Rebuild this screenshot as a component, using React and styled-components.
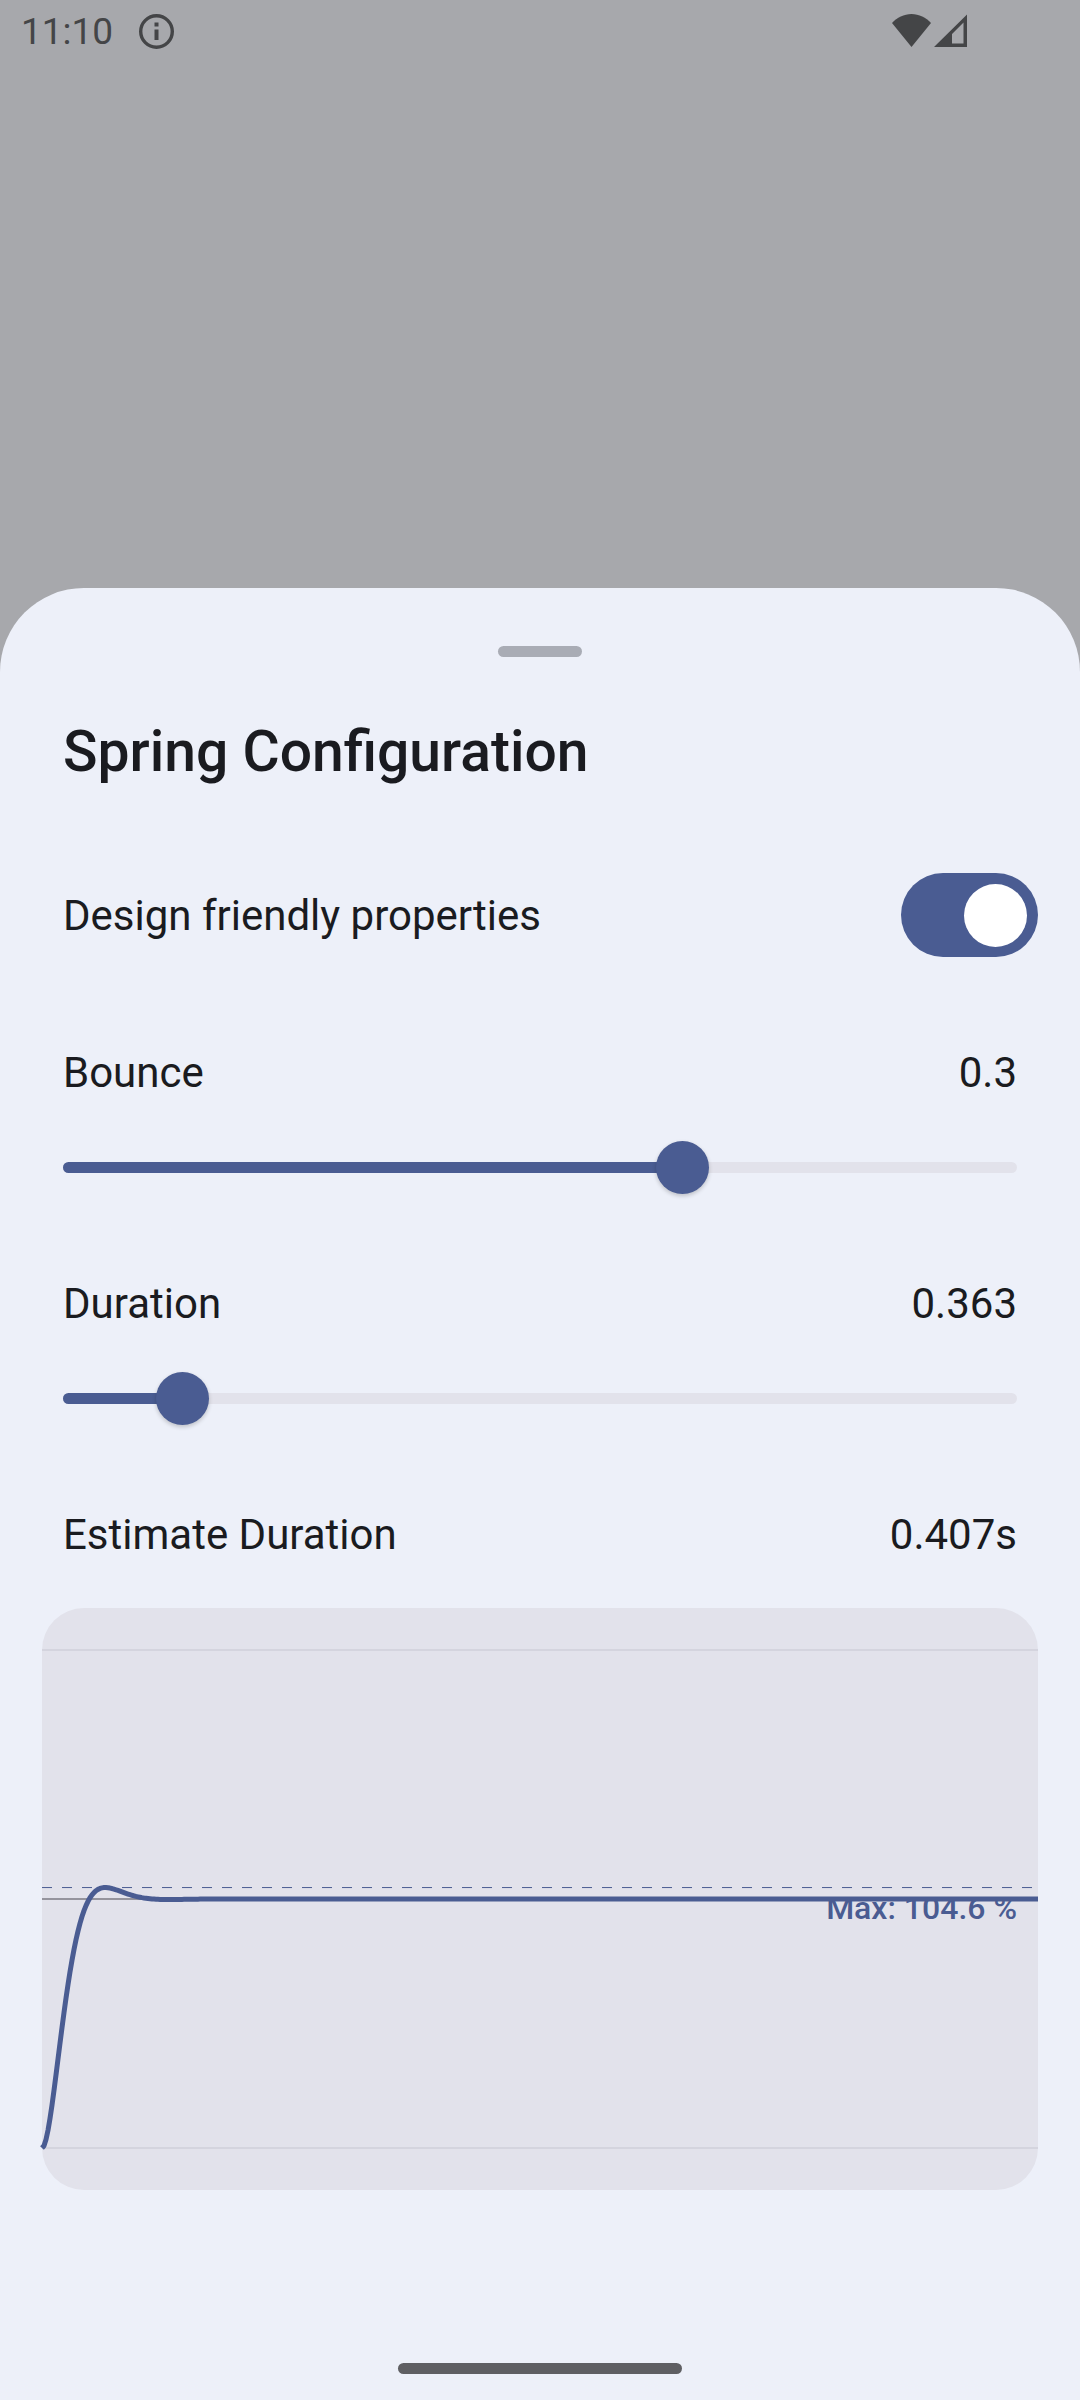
import React, { useState } from "react";
import styled, { createGlobalStyle } from "styled-components";

const color = {
  scrim: "#a7a8ac",
  status: "#444547",
  sheet: "#edf0f9",
  ink: "#1a1b20",
  primary: "#4a5c92",
  track: "#e2e2eb",
  handle: "#a9acb5",
  gesture: "#5f5f63",
  gridLight: "#d4d4de",
  gridStrong: "#95949d",
};

const GlobalStyle = createGlobalStyle`
  *, *::before, *::after { box-sizing: border-box; }
  body {
    margin: 0;
    background: ${color.scrim};
    color: ${color.ink};
    font-family: Roboto, "Noto Sans", sans-serif;
  }
`;

const Screen = styled.div`
  display: flex;
  flex-direction: column;
  min-height: 100vh;
`;

const StatusBar = styled.header`
  display: flex;
  align-items: center;
  justify-content: space-between;
  padding: 0 113px 0 21px;
  color: ${color.status};
`;

const StatusGroup = styled.div`
  display: flex;
  align-items: center;
  gap: ${(p) => p.$gap}px;
`;

const Clock = styled.time`
  font-size: 37px;
  line-height: 63px;
`;

const Sheet = styled.main`
  display: flex;
  flex-direction: column;
  margin-top: auto;
  padding: 58px 42px 26px;
  border-radius: 84px 84px 0 0;
  background: ${color.sheet};
`;

const Pill = styled.div`
  align-self: center;
  width: ${(p) => p.$width}px;
  height: 11px;
  border-radius: 6px;
  background: ${(p) => p.$color};
`;

const Title = styled.h1`
  margin: 58px 21px 84px;
  font-size: 57px;
  line-height: 74px;
  font-weight: 500;
`;

const SwitchRow = styled.div`
  display: flex;
  align-items: center;
  justify-content: space-between;
  padding-left: 21px;
  margin-bottom: 84px;
`;

const Label = styled.label`
  font-size: 42px;
  line-height: 63px;
`;

const Value = styled.output`
  font-size: 42px;
  line-height: 63px;
`;

const Switch = styled.input`
  appearance: none;
  display: flex;
  align-items: center;
  width: 137px;
  height: 84px;
  margin: 0;
  padding: 0 11px;
  border-radius: 42px;
  background: ${color.handle};

  &::before {
    content: "";
    width: 63px;
    height: 63px;
    border-radius: 50%;
    background: #fff;
  }

  &:checked {
    justify-content: flex-end;
    background: ${color.primary};
  }
`;

const Field = styled.div`
  display: flex;
  flex-direction: column;
  gap: 37px;
  margin: 0 21px 78px;
`;

const Row = styled.div`
  display: flex;
  justify-content: space-between;
`;

const SliderBox = styled.div`
  display: grid;
  align-items: center;
  height: 53px;
`;

const Track = styled.div`
  grid-area: 1 / 1;
  height: 11px;
  border-radius: 6px;
  overflow: hidden;
  background: ${color.track};
`;

const Fill = styled.div`
  height: 100%;
  background: ${color.primary};
`;

const Range = styled.input`
  grid-area: 1 / 1;
  appearance: none;
  width: calc(100% + 53px);
  height: 53px;
  margin: 0 -27px 0 -26px;
  background: transparent;

  &::-webkit-slider-thumb {
    appearance: none;
    width: 53px;
    height: 53px;
    border-radius: 50%;
    background: ${color.primary};
    box-shadow: 0 2px 4px rgba(0, 0, 0, 0.2);
  }
`;

const Summary = styled(Row)`
  margin: 0 21px 42px;
`;

const ChartPanel = styled.figure`
  display: grid;
  margin: 0 0 173px;
  height: 582px;
  border-radius: 42px;
  background: ${color.track};
`;

const ChartCaption = styled.figcaption`
  grid-area: 1 / 1;
  place-self: start end;
  padding: 279px 21px 0 0;
  color: ${color.primary};
  font-size: 32px;
  line-height: 42px;
  font-weight: 500;
`;

const ChartSvg = styled.svg`
  grid-area: 1 / 1;
  display: block;
  width: 100%;
  height: 100%;
  overflow: visible;
`;

const CHART = { width: 996, height: 582, top: 42, target: 291, base: 540, seconds: 4 };

function springAt(t, damping, response) {
  const w = (2 * Math.PI) / response;
  const wd = w * Math.sqrt(1 - damping * damping);
  const decay = Math.exp(-damping * w * t);
  return 1 - decay * (Math.cos(wd * t) + ((damping * w) / wd) * Math.sin(wd * t));
}

function curvePath(damping, response) {
  const points = [];
  for (let x = 0; x <= CHART.width; x += 2) {
    const v = springAt((x / CHART.width) * CHART.seconds, damping, response);
    points.push(`${x} ${(CHART.base - v * (CHART.base - CHART.target)).toFixed(2)}`);
  }
  return `M${points.join("L")}`;
}

function SpringChart({ bounce, duration }) {
  const damping = Math.min(0.999, Math.max(0.05, 1 - Math.round(bounce * 10) / 10));
  const overshoot = Math.exp((-Math.PI * damping) / Math.sqrt(1 - damping * damping));
  const peak = CHART.target - overshoot * (CHART.base - CHART.target);
  return (
    <ChartPanel>
      <ChartCaption>Max: {(100 + overshoot * 100).toFixed(1)} %</ChartCaption>
      <ChartSvg
        viewBox={`0 0 ${CHART.width} ${CHART.height}`}
        preserveAspectRatio="none"
        fill="none"
        role="img"
        aria-label="Spring curve"
      >
        <path d={`M0 ${CHART.top}H996M0 ${CHART.base}H996`} stroke={color.gridLight} strokeWidth="2" />
        <path d={`M0 ${CHART.target}H996`} stroke={color.gridStrong} strokeWidth="2" />
        <path d={`M0 ${peak}H996`} stroke={color.primary} strokeWidth="1" strokeDasharray="10 10" />
        <path
          d={curvePath(damping, duration)}
          stroke={color.primary}
          strokeWidth="5"
          strokeLinejoin="round"
        />
      </ChartSvg>
    </ChartPanel>
  );
}

function SliderField({ id, label, value, text, min, max, onChange }) {
  const percent = ((value - min) / (max - min)) * 100;
  return (
    <Field>
      <Row>
        <Label htmlFor={id}>{label}</Label>
        <Value htmlFor={id}>{text}</Value>
      </Row>
      <SliderBox>
        <Track>
          <Fill style={{ width: `${percent}%` }} />
        </Track>
        <Range
          id={id}
          type="range"
          min={min}
          max={max}
          step="0.001"
          value={value}
          onChange={(e) => onChange(Number(e.target.value))}
        />
      </SliderBox>
    </Field>
  );
}

function InfoIcon() {
  return (
    <svg width="35" height="35" viewBox="0 0 35 35" fill="none" aria-hidden="true">
      <circle cx="17.5" cy="17.5" r="15.8" stroke="currentColor" strokeWidth="3.4" />
      <path d="M15.5 8.5h4v4h-4zM15.5 15.500h4v10.500h-4z" fill="currentColor" />
    </svg>
  );
}

function WifiIcon() {
  return (
    <svg width="39" height="35" viewBox="0 0 39 35" fill="currentColor" aria-hidden="true">
      <path d="M0 9C5 3.500 12 0 19.500 0S34 3.500 39 9L19.500 33Z" />
    </svg>
  );
}

function SignalIcon() {
  return (
    <svg width="33" height="35" viewBox="0 0 33 35" fill="currentColor" aria-hidden="true">
      <path fillRule="evenodd" d="M33 .5V33H0ZM29.500 8.500L18 20V29.500H29.500Z" />
    </svg>
  );
}

export default function App() {
  const [friendly, setFriendly] = useState(true);
  const [bounce, setBounce] = useState(0.297);
  const [duration, setDuration] = useState(0.363);

  return (
    <Screen>
      <GlobalStyle />
      <StatusBar>
        <StatusGroup $gap={26}>
          <Clock>11:10</Clock>
          <InfoIcon />
        </StatusGroup>
        <StatusGroup $gap={3}>
          <WifiIcon />
          <SignalIcon />
        </StatusGroup>
      </StatusBar>
      <Sheet>
        <Pill $width={84} $color={color.handle} />
        <Title>Spring Configuration</Title>
        <SwitchRow>
          <Label htmlFor="friendly">Design friendly properties</Label>
          <Switch
            id="friendly"
            type="checkbox"
            role="switch"
            checked={friendly}
            onChange={(e) => setFriendly(e.target.checked)}
          />
        </SwitchRow>
        <SliderField
          id="bounce"
          label="Bounce"
          value={bounce}
          text={bounce.toFixed(1)}
          min={-1}
          max={1}
          onChange={setBounce}
        />
        <SliderField
          id="duration"
          label="Duration"
          value={duration}
          text={duration.toFixed(3)}
          min={0.1}
          max={2.2}
          onChange={setDuration}
        />
        <Summary>
          <Label as="span">Estimate Duration</Label>
          <Value>{(duration * 1.121).toFixed(3)}s</Value>
        </Summary>
        <SpringChart bounce={bounce} duration={duration} />
        <Pill $width={284} $color={color.gesture} />
      </Sheet>
    </Screen>
  );
}
